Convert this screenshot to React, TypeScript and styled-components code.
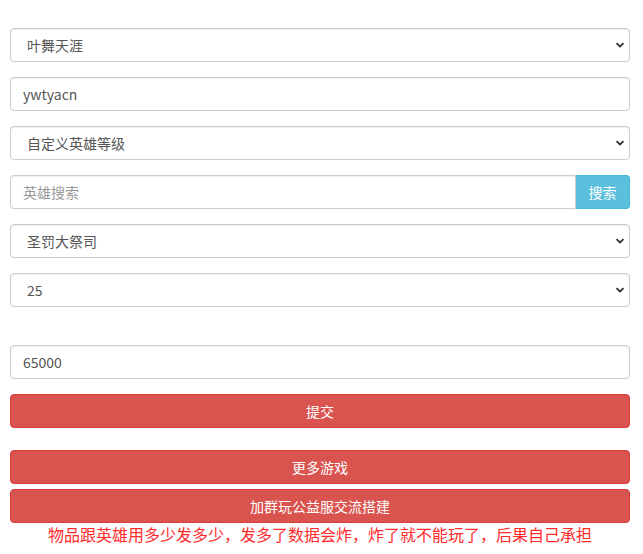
import * as React from 'react';
import styled, { createGlobalStyle } from 'styled-components';

const GlobalStyle = createGlobalStyle`
    html, body {
        margin: 0;
        padding: 0;
        background: #fff;
    }
    body {
        font-family: "Noto Sans CJK SC", "Noto Sans", sans-serif;
        font-size: 14px;
        line-height: 1.42857;
        color: #333;
    }
    * {
        box-sizing: border-box;
    }
`;

const heroOptions = ['叶舞天涯'];
const levelOptions = ['自定义英雄等级'];
const heroList = ['圣罚大祭司'];
const levels = ['25'];

export default function App() {
    return (
        <Page>
            <GlobalStyle />
            <Group>
                <SelectBox options={heroOptions} />
            </Group>
            <Group>
                <TextInput defaultValue="ywtyacn" />
            </Group>
            <Group>
                <SelectBox options={levelOptions} />
            </Group>
            <Group>
                <InputGroup>
                    <TextInput placeholder="英雄搜索" $joined />
                    <SearchButton>搜索</SearchButton>
                </InputGroup>
            </Group>
            <Group>
                <SelectBox options={heroList} />
            </Group>
            <Group $space={38}>
                <SelectBox options={levels} />
            </Group>
            <Group>
                <TextInput defaultValue="65000" />
            </Group>
            <Group $space={22}>
                <DangerButton>提交</DangerButton>
            </Group>
            <Group $space={5}>
                <DangerButton>更多游戏</DangerButton>
            </Group>
            <Group $space={0}>
                <DangerButton>加群玩公益服交流搭建</DangerButton>
            </Group>
            <Warning>物品跟英雄用多少发多少，发多了数据会炸，炸了就不能玩了，后果自己承担</Warning>
        </Page>
    );
}

function SelectBox(props: { options: string[] }) {
    return (
        <SelectWrap>
            <Select defaultValue={props.options[0]}>
                {props.options.map(o => <option key={o}>{o}</option>)}
            </Select>
            <Chevron width="10" height="6" viewBox="0 0 10 6">
                <polyline points="1.5,1.2 5,4.5 8.5,1.2" fill="none" stroke="#333" strokeWidth="1.8" />
            </Chevron>
        </SelectWrap>
    );
}

const Page = styled('div')`
    padding: 28px 13px 0 10px;
    display: flex;
    flex-direction: column;
`;

const Group = styled('div')<{ $space?: number }>`
    margin-bottom: ${p => (p.$space ?? 15)}px;
`;

const SelectWrap = styled('div')`
    position: relative;
`;

const Select = styled('select')`
    appearance: none;
    display: block;
    width: 100%;
    height: 34px;
    padding: 6px 30px 6px 16px;
    font-family: inherit;
    font-size: 14px;
    color: #555;
    background: #fff;
    border: 1px solid #ccc;
    border-radius: 4px;
    box-shadow: inset 0 1px 1px rgba(0, 0, 0, 0.075);
    outline: none;
`;

const Chevron = styled('svg')`
    position: absolute;
    right: 5px;
    top: 14px;
    pointer-events: none;
`;

const TextInput = styled('input')<{ $joined?: boolean }>`
    display: block;
    width: 100%;
    flex: 1;
    height: 34px;
    padding: 6px 12px;
    font-family: inherit;
    font-size: 14px;
    color: #555;
    background: #fff;
    border: 1px solid #ccc;
    border-radius: ${p => (p.$joined ? '4px 0 0 4px' : '4px')};
    box-shadow: inset 0 1px 1px rgba(0, 0, 0, 0.075);
    outline: none;

    &::placeholder {
        color: #999;
    }
`;

const InputGroup = styled('div')`
    display: flex;
    width: 100%;
`;

const SearchButton = styled('button')`
    width: 54px;
    height: 34px;
    padding: 0;
    font-family: inherit;
    font-size: 14px;
    color: #fff;
    background: #5bc0de;
    border: 1px solid #46b8da;
    border-left: none;
    border-radius: 0 4px 4px 0;
`;

const DangerButton = styled('button')`
    display: block;
    width: 100%;
    height: 34px;
    padding: 6px 12px;
    font-family: inherit;
    font-size: 14px;
    color: #fff;
    background: #d9534f;
    border: 1px solid #d43f3a;
    border-radius: 4px;
`;

const Warning = styled('div')`
    text-align: center;
    font-size: 16px;
    line-height: 22px;
    color: #ff2a2a;
`;
